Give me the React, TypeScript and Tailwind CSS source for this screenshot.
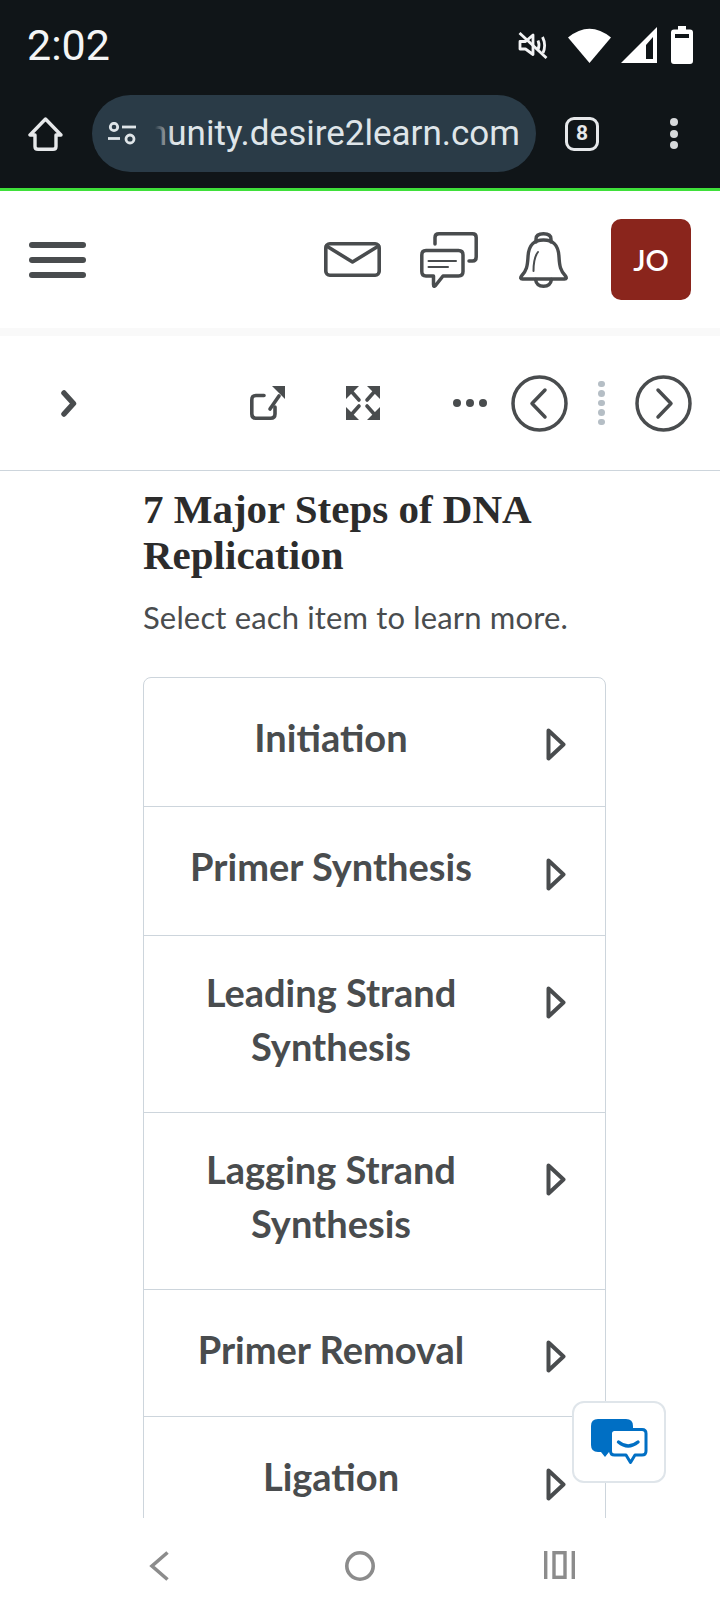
import React from "react";

const rows = [
  { label: "Initiation", h: "h-[129px]", pt: "pt-[32px]", arrow: "mt-[18px]" },
  { label: "Primer Synthesis", h: "h-[129px]", pt: "pt-[32px]", arrow: "mt-[19px]" },
  { label: "Leading Strand Synthesis", h: "h-[177px]", pt: "pt-[29px]", arrow: "mt-[21px]" },
  { label: "Lagging Strand Synthesis", h: "h-[177px]", pt: "pt-[29px]", arrow: "mt-[21px]" },
  { label: "Primer Removal", h: "h-[127px]", pt: "pt-[32px]", arrow: "mt-[18px]" },
  { label: "Ligation", h: "h-[127px]", pt: "pt-[32px]", arrow: "mt-[19px]" },
];

function Arrow() {
  return (
    <svg width="20" height="33" viewBox="0 0 20 33" fill="none" stroke="#494c4e" strokeWidth="4" strokeLinejoin="round">
      <path d="M2.5 2.5 L17.5 16.5 L2.5 30.5 Z" />
    </svg>
  );
}

function Mute() {
  return (
    <svg width="30" height="27" viewBox="0 0 30 27" fill="none" stroke="#f2f3f4" strokeWidth="2.8">
      <path d="M2 9.5 H7.5 L15 3 V22.5 L7.5 17 H2 Z" strokeLinejoin="round" />
      <path d="M20 8.5 Q22 13 20 17.5" />
      <path d="M24.5 5 Q28.5 13 25 21" />
      <path d="M1.5 1 L28.5 26" />
    </svg>
  );
}

function Wifi() {
  return (
    <svg width="43" height="36" viewBox="0 0 43 36" fill="#ffffff">
      <path d="M0 10.5 Q21.5 -7 43 10.5 L21.5 36 Z" />
    </svg>
  );
}

function Signal() {
  return (
    <svg width="36" height="36" viewBox="0 0 36 36">
      <path d="M36 0 V36 H0 Z M25 18 V32 H32 V10 Z" fill="#ffffff" fillRule="evenodd" />
    </svg>
  );
}

function Battery() {
  return (
    <svg width="22" height="38" viewBox="0 0 22 38">
      <path
        d="M7 0 H15 V3.5 H19 Q22 3.5 22 6.5 V35 Q22 38 19 38 H3 Q0 38 0 35 V6.5 Q0 3.5 3 3.5 H7 Z M4 8 V12 H18 V8 Z"
        fill="#ffffff"
        fillRule="evenodd"
      />
    </svg>
  );
}

function Home() {
  return (
    <svg width="35" height="34" viewBox="0 0 35 34" fill="none" stroke="#e6e8ea" strokeWidth="3.4" strokeLinejoin="round">
      <path d="M17.5 2 L2 18 H7 V29.5 Q7 32.3 10 32.3 H25 Q28 32.3 28 29.5 V18 H33 Z" />
    </svg>
  );
}

function Tune() {
  return (
    <svg width="28" height="23" viewBox="0 0 28 23" fill="none" stroke="#dfe5e9" strokeWidth="2.8">
      <circle cx="6" cy="5" r="3.7" />
      <path d="M14 5 H28" />
      <path d="M0 16.5 H12" />
      <circle cx="22" cy="17" r="4" />
    </svg>
  );
}

function Mail() {
  return (
    <svg width="57" height="35" viewBox="0 0 57 35" fill="none" stroke="#494c4e" strokeWidth="3.6" strokeLinejoin="round" strokeLinecap="round">
      <rect x="1.8" y="1.8" width="53.4" height="31.4" rx="4" />
      <path d="M2.5 4 L28.5 20 L54.5 4" />
    </svg>
  );
}

function Chat() {
  return (
    <svg width="58" height="56" viewBox="0 0 58 56" fill="none" stroke="#494c4e" strokeWidth="3.5" strokeLinejoin="round" strokeLinecap="round">
      <path d="M15 12 V5.5 Q15 1.8 19 1.8 H52.5 Q56.2 1.8 56.2 5.5 V25 Q56.2 29 52.5 29 H49" />
      <path d="M6 18.5 H38.5 Q43 18.5 43 23 V39.5 Q43 44 38.5 44 H23 L15.5 53.5 Q13.5 55.5 13.5 52.5 V44 H6 Q1.8 44 1.8 39.5 V23 Q1.8 18.5 6 18.5 Z" />
      <path d="M8.5 29 H36" strokeWidth="2" />
      <path d="M8.5 35 H28" strokeWidth="2" />
    </svg>
  );
}

function Bell() {
  return (
    <svg width="49" height="56" viewBox="0 0 49 56" fill="none" stroke="#494c4e" strokeWidth="3.4" strokeLinejoin="round" strokeLinecap="round">
      <path d="M17 10 V7 Q17 1.8 24.5 1.8 Q32 1.8 32 7 V10" />
      <path d="M24.5 8 C13 8 9.5 15 9 25 C8.5 34 7.5 39 2.5 44 Q0.5 47 3.5 47 H45.5 Q48.5 47 46.5 44 C41.5 39 40.5 34 40 25 C39.5 15 36 8 24.5 8 Z" />
      <path d="M16.5 47.5 Q17.5 54.2 24.5 54.2 Q31.5 54.2 32.5 47.5" />
      <path d="M14.5 39 C14.5 31 15 25 19 20" strokeWidth="2" />
    </svg>
  );
}

function Open() {
  return (
    <svg width="35" height="34" viewBox="0 0 35 34" fill="none" stroke="#494c4e" strokeWidth="3.6" strokeLinecap="round" strokeLinejoin="round">
      <path d="M14 9.5 H6 Q1.8 9.5 1.8 14 V28 Q1.8 32.2 6 32.2 H20.5 Q25 32.2 25 28 V21" />
      <path d="M20 23 L29 10" />
      <path d="M22 0 H35 V13 Z" fill="#494c4e" stroke="none" />
    </svg>
  );
}

function Expand() {
  return (
    <svg width="34" height="34" viewBox="0 0 34 34" fill="#494c4e" stroke="none">
      <path d="M0 0 H13 L0 13 Z" />
      <path d="M34 0 H21 L34 13 Z" />
      <path d="M0 34 H13 L0 21 Z" />
      <path d="M34 34 H21 L34 21 Z" />
      <path d="M5 5 L13 14 M29 5 L21 14 M5 29 L13 20 M29 29 L21 20" stroke="#494c4e" strokeWidth="3.6" strokeLinecap="round" />
    </svg>
  );
}

function Circle({ d }: { d: string }) {
  return (
    <svg width="57" height="57" viewBox="0 0 57 57" fill="none" stroke="#494c4e" strokeWidth="3.5" strokeLinecap="round" strokeLinejoin="round">
      <circle cx="28.5" cy="28.5" r="26.5" />
      <path d={d} />
    </svg>
  );
}

function ChatWidget() {
  return (
    <svg width="57" height="47" viewBox="0 0 57 47">
      <path d="M7 0 H35 Q42 0 42 7 V26 Q42 33 35 33 H18 L14 38 L10 33 H7 Q0 33 0 26 V7 Q0 0 7 0 Z" fill="#006fc4" />
      <path
        d="M23.5 10.5 H51 Q55 10.5 55 14.5 V32 Q55 36 51 36 H44 L39.5 43.5 L35 36 H23.5 Q19.5 36 19.5 32 V14.5 Q19.5 10.5 23.5 10.5 Z"
        fill="#ffffff"
        stroke="#006fc4"
        strokeWidth="3"
        strokeLinejoin="round"
      />
      <path d="M27.5 23 Q37 31 47 23" fill="none" stroke="#006fc4" strokeWidth="3.4" strokeLinecap="round" />
    </svg>
  );
}

export default function App() {
  return (
    <div className="relative flex h-[1612px] w-[720px] flex-col overflow-hidden bg-white font-['Lato',sans-serif]">
      {/* Android status bar and browser toolbar */}
      <div className="bg-[#101518]">
        <div className="flex h-[90px] items-center pl-[27px] pr-[27px]">
          <span className="font-['Roboto',sans-serif] text-[43px] leading-none text-[#f4f5f6]">2:02</span>
          <div className="ml-auto flex items-center">
            <Mute />
            <div className="ml-[20px]"><Wifi /></div>
            <div className="ml-[10px]"><Signal /></div>
            <div className="ml-[14px]"><Battery /></div>
          </div>
        </div>
        <div className="flex h-[98px] items-center pb-[11px] pl-[28px]">
          <Home />
          <div className="ml-[29px] flex h-[77px] w-[444px] items-center rounded-full bg-[#2a3b47] pl-[16px] pr-[16px]">
            <Tune />
            <div className="relative ml-[19px] flex flex-1 justify-end overflow-hidden">
              <span className="whitespace-nowrap font-['Roboto',sans-serif] text-[35px] leading-[48px] text-[#dfe5e9]">community.desire2learn.com</span>
              <div className="absolute inset-y-0 left-0 w-[18px] bg-linear-to-r from-[#2a3b47] to-transparent" />
            </div>
          </div>
          <div className="ml-[29px] flex h-[34px] w-[34px] items-center justify-center rounded-[9px] border-[3.5px] border-[#e6e8ea] font-['Roboto',sans-serif] text-[21px] font-bold text-[#e6e8ea]">8</div>
          <div className="ml-[71px] flex flex-col gap-[3.5px]">
            <div className="h-[8px] w-[8px] rounded-full bg-[#d7d9db]" />
            <div className="h-[8px] w-[8px] rounded-full bg-[#d7d9db]" />
            <div className="h-[8px] w-[8px] rounded-full bg-[#d7d9db]" />
          </div>
        </div>
      </div>
      <div className="h-[3px] bg-[#3fe03a]" />

      {/* D2L navbar */}
      <div className="flex h-[137px] items-center pl-[29px] pr-[29px]">
        <div className="flex w-[57px] flex-col gap-[9px]">
          <div className="h-[6px] rounded-full bg-[#494c4e]" />
          <div className="h-[6px] rounded-full bg-[#494c4e]" />
          <div className="h-[6px] rounded-full bg-[#494c4e]" />
        </div>
        <div className="ml-[238px]"><Mail /></div>
        <div className="ml-[39px]"><Chat /></div>
        <div className="ml-[41px]"><Bell /></div>
        <div className="ml-[43px] flex h-[81px] w-[80px] items-center justify-center rounded-[10px] bg-[#8a251c] text-[29px] font-semibold text-white">JO</div>
      </div>
      <div className="h-[8px] bg-[#f9f9f9]" />

      {/* Content toolbar */}
      <div className="flex h-[135px] items-center border-b border-[#cdd5dc] pl-[61px]">
        <svg width="16" height="27" viewBox="0 0 16 27" fill="none" stroke="#494c4e" strokeWidth="5.5" strokeLinecap="round" strokeLinejoin="round">
          <path d="M3 3 L12.5 13.5 L3 24" />
        </svg>
        <div className="ml-[173px]"><Open /></div>
        <div className="ml-[61px]"><Expand /></div>
        <div className="ml-[73px] flex w-[34px] justify-between">
          <div className="h-[8px] w-[8px] rounded-full bg-[#494c4e]" />
          <div className="h-[8px] w-[8px] rounded-full bg-[#494c4e]" />
          <div className="h-[8px] w-[8px] rounded-full bg-[#494c4e]" />
        </div>
        <div className="ml-[24px]"><Circle d="M34 15 L21 28.5 L34 42" /></div>
        <div className="ml-[30px] flex flex-col gap-[3px]">
          <div className="h-[6.5px] w-[6.5px] rounded-full bg-[#b5bec5]" />
          <div className="h-[6.5px] w-[6.5px] rounded-full bg-[#b5bec5]" />
          <div className="h-[6.5px] w-[6.5px] rounded-full bg-[#b5bec5]" />
          <div className="h-[6.5px] w-[6.5px] rounded-full bg-[#b5bec5]" />
          <div className="h-[6.5px] w-[6.5px] rounded-full bg-[#b5bec5]" />
        </div>
        <div className="ml-[30px]"><Circle d="M23 15 L36 28.5 L23 42" /></div>
      </div>

      {/* Page content */}
      <div className="min-h-0 flex-1 overflow-hidden pl-[143px]">
        <div className="w-[463px]">
          <h1 className="mt-[15px] font-['Liberation_Serif',serif] text-[41px] font-bold leading-[46px] text-[#2c2c2c]">7 Major Steps of DNA Replication</h1>
          <p className="mt-[17px] text-[31px] leading-[44px] tracking-[0.15px] text-[#494c4e]">Select each item to learn more.</p>
          <div className="mt-[38px] rounded-t-[8px] border border-[#cdd5dc]">
            {rows.map((r) => (
              <div key={r.label} className={`flex items-start border-b border-[#cdd5dc] pr-[39px] ${r.h} ${r.pt}`}>
                <div className="mr-[28px] flex-1 text-center text-[38px] font-bold leading-[54px] text-[#494c4e]">{r.label}</div>
                <div className={r.arrow}><Arrow /></div>
              </div>
            ))}
          </div>
        </div>
      </div>

      {/* Android nav bar */}
      <div className="flex h-[94px] items-start bg-white pl-[149px] pt-[33px]">
        <svg width="20" height="30" viewBox="0 0 20 30" fill="none" stroke="#8c8c8c" strokeWidth="3.6">
          <path d="M18.5 1.5 L3 15 L18.5 28.5" />
        </svg>
        <svg className="ml-[176px]" width="30" height="30" viewBox="0 0 30 30" fill="none" stroke="#8c8c8c" strokeWidth="3.6">
          <circle cx="15" cy="15" r="13.2" />
        </svg>
        <svg className="ml-[169px]" width="31" height="28" viewBox="0 0 31 28" fill="none" stroke="#8c8c8c" strokeWidth="3.4">
          <path d="M1.7 0 V28 M29.3 0 V28" />
          <rect x="10" y="1.7" width="11" height="24.6" />
        </svg>
      </div>

      {/* Floating chat widget */}
      <div className="absolute left-[572px] top-[1401px] flex h-[82px] w-[94px] items-center justify-center rounded-[12px] border-2 border-[#dfe5ea] bg-white">
        <ChatWidget />
      </div>
    </div>
  );
}
